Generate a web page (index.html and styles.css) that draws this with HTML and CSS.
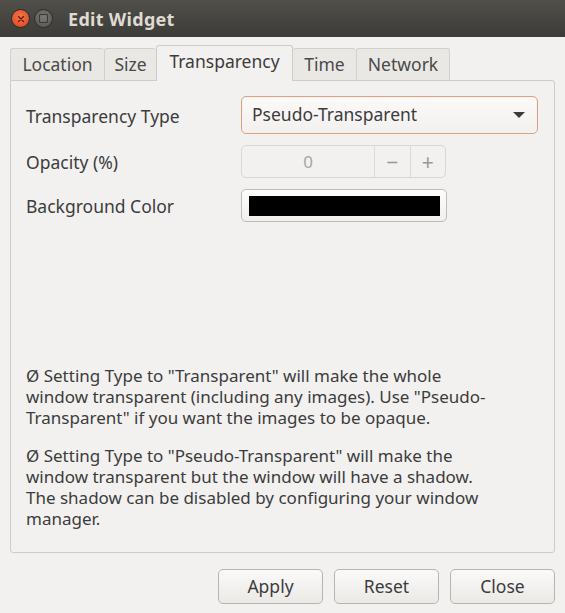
FILE: index.html
```html
<!DOCTYPE html>
<html>
<head>
<meta charset="utf-8">
<link rel="stylesheet" href="styles.css">
</head>
<body>
<div class="window">
  <div class="titlebar">
    <span class="wbtn close"><svg width="8" height="8" viewBox="0 0 8 8"><path d="M1.5 1.5L6.5 6.5M6.5 1.5L1.5 6.5" stroke="#6b1a08" stroke-width="1.4" stroke-linecap="round"/></svg></span>
    <span class="wbtn min"><span class="sq"></span></span>
    <span class="title">Edit Widget</span>
  </div>
  <div class="content">
    <div class="tabs">
      <div class="tab w-loc">Location</div>
      <div class="tab w-size">Size</div>
      <div class="tab active w-tr">Transparency</div>
      <div class="tab w-time">Time</div>
      <div class="tab w-net">Network</div>
    </div>
    <div class="panel">
      <div class="grid">
        <div class="label">Transparency Type</div>
        <div class="combo"><span>Pseudo-Transparent</span><span class="arrow"></span></div>
        <div class="label">Opacity (%)</div>
        <div class="spin">
          <span class="spin-val">0</span>
          <span class="spin-btn">−</span>
          <span class="spin-btn">+</span>
        </div>
        <div class="label">Background Color</div>
        <div class="colorbtn"><span class="swatch"></span></div>
      </div>
      <div class="notes">
        <p>Ø Setting Type to "Transparent" will make the whole<br>window transparent (including any images). Use "Pseudo-<br>Transparent" if you want the images to be opaque.</p>
        <p>Ø Setting Type to "Pseudo-Transparent" will make the<br>window transparent but the window will have a shadow.<br>The shadow can be disabled by configuring your window<br>manager.</p>
      </div>
    </div>
    <div class="actions">
      <div class="btn">Apply</div>
      <div class="btn">Reset</div>
      <div class="btn">Close</div>
    </div>
  </div>
</div>
</body>
</html>
```
FILE: styles.css
```css
html, body {
  margin: 0;
  padding: 0;
  background: #f2f1f0;
}
.window {
  width: 565px;
  height: 613px;
  display: flex;
  flex-direction: column;
  font-family: "Noto Sans", "Open Sans", sans-serif;
  font-size: 17px;
  color: #3c3c3c;
  overflow: hidden;
}
.titlebar {
  height: 37px;
  flex: none;
  background: linear-gradient(#514f4a, #3c3b37);
  display: flex;
  align-items: center;
  padding-left: 11px;
  box-sizing: border-box;
}
.wbtn {
  width: 19px;
  height: 19px;
  border-radius: 50%;
  display: flex;
  align-items: center;
  justify-content: center;
  box-sizing: border-box;
}
.wbtn.close {
  background: radial-gradient(circle at 50% 40%, #f2794e, #e1522a 70%, #b53d1b);
  border: 1px solid #2f2e2a;
}
.wbtn.min {
  margin-left: 4px;
  background: radial-gradient(circle at 50% 40%, #7b7a75, #5c5b56 75%);
  border: 1px solid #2f2e2a;
}
.sq {
  width: 7px;
  height: 7px;
  border: 1.5px solid #3a3935;
  border-radius: 1px;
}
.title {
  margin-left: 15px;
  color: #dfdbd2;
  font-weight: bold;
  font-size: 18px;
  letter-spacing: 0.3px;
}
.content {
  flex: 1;
  display: flex;
  flex-direction: column;
  padding: 8px 10px 9px 10px;
}
.tabs {
  display: flex;
  align-items: flex-end;
  height: 35px;
  position: relative;
  z-index: 1;
}
.tab {
  height: 32px;
  box-sizing: border-box;
  border: 1px solid #d3d0cb;
  border-bottom: none;
  border-right: none;
  border-radius: 3px 3px 0 0;
  background: #eae8e5;
  display: flex;
  align-items: center;
  justify-content: center;
  font-size: 17.5px;
  color: #4a4a4a;
  padding-bottom: 2px;
}
.tab.w-net { border-right: 1px solid #d3d0cb; }
.tab.active {
  height: 36px;
  background: #f2f1f0;
  border: 1px solid #cfccc7;
  border-bottom: none;
  margin-bottom: -1px;
  color: #3c3c3c;
  padding-bottom: 5px;
}
.tab.active + .tab { border-left: none; }
.w-loc { width: 94px; }
.w-size { width: 52px; }
.w-tr { width: 137px; }
.w-time { width: 63px; }
.w-net { width: 94px; }
.panel {
  flex: 1;
  border: 1px solid #cfccc7;
  border-radius: 0 3px 3px 3px;
  display: flex;
  flex-direction: column;
  padding: 15px 16px 23px 15px;
  box-sizing: border-box;
}
.grid {
  display: grid;
  grid-template-columns: 215px 297px;
  row-gap: 11px;
  align-items: center;
}
.label {
  font-size: 17.5px;
  padding-top: 1px;
}
.combo {
  height: 38px;
  box-sizing: border-box;
  border: 1px solid #d4a48a;
  border-radius: 5px;
  background: linear-gradient(#fbfaf9, #f3f1ef);
  box-shadow: inset 0 0 0 1px #fbeee6;
  display: flex;
  align-items: center;
  justify-content: space-between;
  padding: 0 12px 2px 10px;
  font-size: 17.5px;
  color: #3c3c3c;
}
.arrow {
  width: 0;
  height: 0;
  border-left: 6px solid transparent;
  border-right: 6px solid transparent;
  border-top: 6px solid #3c3c3c;
  margin-top: 2px;
}
.spin {
  width: 205px;
  height: 33px;
  box-sizing: border-box;
  border: 1px solid #d9d7d3;
  border-radius: 5px;
  background: #f2f1f0;
  display: flex;
  color: #a8a6a2;
  font-size: 17px;
}
.spin-val {
  width: 132px;
  display: flex;
  align-items: center;
  justify-content: center;
}
.spin-btn {
  flex: 1;
  border-left: 1px solid #dcdad6;
  display: flex;
  align-items: center;
  justify-content: center;
  font-size: 21px;
  color: #9a9894;
}
.colorbtn {
  width: 206px;
  height: 33px;
  box-sizing: border-box;
  border: 1px solid #bfbcb7;
  border-radius: 5px;
  background: linear-gradient(#fdfdfc, #f1efed);
  padding: 6px 6px 5px 7px;
}
.swatch {
  display: block;
  height: 100%;
  background: #000;
}
.notes {
  margin-top: auto;
  font-size: 17px;
  line-height: 21px;
  white-space: nowrap;
}
.notes p {
  margin: 0;
}
.notes p + p {
  margin-top: 17px;
}
.actions {
  display: flex;
  justify-content: flex-end;
  gap: 11px;
  padding-top: 16px;
}
.btn {
  width: 105px;
  height: 35px;
  box-sizing: border-box;
  border: 1px solid #b8b5b0;
  border-radius: 5px;
  background: linear-gradient(#fafaf9, #ebe9e6);
  display: flex;
  align-items: center;
  justify-content: center;
  font-size: 17.5px;
  color: #3c3c3c;
  padding-bottom: 1px;
}
```
